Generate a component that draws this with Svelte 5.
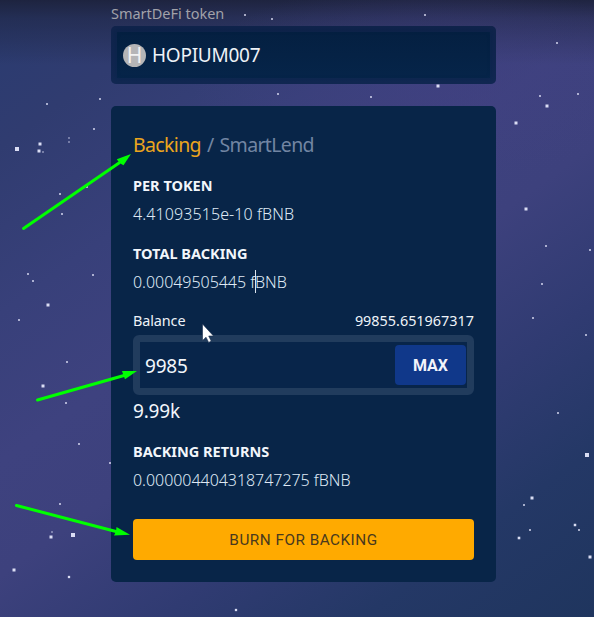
<script>
  const stars = [
    [245,15,2],[272,19,2],[47,104,2],[100,99,2],[278,94,2],[425,15,2],[438,86,3],[371,97,2],
    [557,43,2],[540,96,2],[547,106,3],[578,94,2],[94,129,2],[17,149,4],[40,144,3],[39,151,3],
    [43,152,1.5],[69,138,1.5],[69,142,1.5],[87,187,2],[60,194,2],[62,214,2],[28,274,2],[33,281,2],
    [93,275,2],[48,305,3],[19,320,2],[67,362,2],[43,386,3],[66,403,2],[79,444,2],[110,463,2],
    [60,504,2],[52,532,1.5],[51,537,3],[73,535,4],[14,570,3],[69,577,2.3],[516,123,3],[526,209,3],
    [546,246,2],[590,250,2],[542,284,2],[533,318,2],[586,335,2],[558,413,2],[587,455,4],[532,498,3],
    [524,505,2],[530,530,2],[519,538,2.6],[575,525,2.5],[579,530,2],[590,557,3],[236,610,2.3]
  ];
</script>

<main>
  <svg class="sky" width="594" height="617" viewBox="0 0 594 617" aria-hidden="true">
    {#each stars as [x, y, s]}
      <rect x={x - s / 2} y={y - s / 2} width={s} height={s} fill="#e4e6fb" opacity={s > 2 ? 0.95 : 0.68} />
    {/each}
  </svg>

  <div class="column">
    <div class="label"><span>SmartDeFi token</span></div>
    <div class="token">
      <span class="avatar">H</span>
      <span class="name">HOPIUM007</span>
    </div>

    <section class="card">
      <h2><span class="active">Backing</span><span class="slash">/</span><span class="lend">SmartLend</span></h2>
      <h3 class="per">PER TOKEN</h3>
      <p class="value v1">4.41093515e-10 fBNB</p>
      <h3 class="total">TOTAL BACKING</h3>
      <p class="value v2">0.00049505445 fBNB</p>
      <div class="balance"><span class="bl">Balance</span><span class="amount">99855.651967317</span></div>
      <div class="field">
        <span class="entry">9985</span>
        <button class="max">MAX</button>
      </div>
      <p class="short">9.99k</p>
      <h3 class="returns">BACKING RETURNS</h3>
      <p class="value v3">0.000004404318747275 fBNB</p>
      <button class="burn">BURN FOR BACKING</button>
    </section>
  </div>

  <svg class="overlay" width="594" height="617" viewBox="0 0 594 617" aria-hidden="true">
    <g stroke="#00ff00" stroke-width="3" stroke-linecap="round" fill="#00ff00">
      <path d="M23.5 228.5 L119 163" />
      <path d="M37.5 400 L124 375.5" />
      <path d="M16.5 505.5 L116 531.5" />
      <g stroke="none">
        <path d="M131 154 L123.5 165.2 L119.5 163 L116.8 159.2 Z" />
        <path d="M137 371 L125 379.2 L123.5 375.5 L122 371 Z" />
        <path d="M130 534.8 L114 535.5 L116 531.5 L116.5 527 Z" />
      </g>
    </g>
    <path d="M255.5 270 V293" stroke="#dce4ee" stroke-width="1" />
    <path d="M202.5 324 V340.5 L206 337.2 L208.7 342.5 L211.2 341 L208.7 336 H213.5 Z" fill="#fff" stroke="#182c4b" stroke-width=".6" />
  </svg>
</main>

<style>
  :global(body) { margin: 0; overflow: hidden; }
  main {
    position: relative;
    width: 594px;
    height: 617px;
    overflow: hidden;
    font-family: "Noto Sans", "Open Sans", sans-serif;
    background:
      linear-gradient(180deg, rgba(28, 33, 58, .9) 0, rgba(28, 33, 58, .5) 18px, rgba(28, 33, 58, 0) 65px),
      linear-gradient(144deg, #2a3b70 0%, #303c70 14%, #38407a 30%, #3e427f 44%, #3d417d 55%, #303b72 70%, #243866 84%, #1f355e 100%);
  }
  main::before {
    content: "";
    position: absolute;
    inset: 0;
    background: radial-gradient(ellipse 240px 100px at 430px 80px, rgba(66, 64, 130, .55), transparent);
  }
  .sky, .overlay { position: absolute; left: 0; top: 0; pointer-events: none; }
  .column { position: relative; width: 385px; margin-left: 111px; }
  h2, h3, p { margin: 0; font-weight: 400; white-space: nowrap; }
  button { border: 0; padding: 0; margin: 0; }
  .label { height: 26px; line-height: 26px; font-size: 14.5px; color: #a1a1a9; white-space: nowrap; letter-spacing: -.02px; }
  .token {
    box-sizing: border-box;
    height: 58px;
    display: flex;
    align-items: center;
    gap: 6px;
    padding: 0 12px;
    border-radius: 5px;
    background: linear-gradient(180deg, #041f40, #06254a);
    box-shadow: inset 0 0 0 6px rgba(42, 48, 100, .24), inset 0 0 8px rgba(42, 48, 100, .25);
  }
  .avatar { width: 23px; height: 23px; border-radius: 50%; background: #b5b5b7; color: #f2f2f2; font-size: 21px; line-height: 22px; text-align: center; }
  .name { font-size: 19px; line-height: 26px; color: #eef2f7; letter-spacing: -.25px; }
  .card {
    box-sizing: border-box;
    height: 476px;
    margin-top: 22px;
    padding: 25px 22px 22px;
    border-radius: 5px;
    background: #082548;
    display: flex;
    flex-direction: column;
  }
  h2 { height: 28px; line-height: 28px; font-size: 19.5px; display: flex; gap: 6px; color: #7285a3; letter-spacing: -.65px; }
  .active { color: #eca51d; }
  h3 { height: 20px; line-height: 20px; font-size: 14.5px; font-weight: 700; color: #f2f6fb; }
  .per { margin-top: 16px; }
  .value { height: 24px; line-height: 24px; font-size: 16px; font-weight: 300; color: #dfe9f5; }
  .v1, .v2, .v3 { margin-top: 7px; }
  .v1 { letter-spacing: .1px; }
  .v2, .v3 { letter-spacing: -.04px; }
  .total { margin-top: 17px; }
  .returns { margin-top: 17px; }
  .balance { height: 20px; line-height: 20px; margin-top: 17px; display: flex; justify-content: space-between; font-size: 14.4px; color: #eef3f8; }
  .bl { letter-spacing: -.1px; }
  .field {
    box-sizing: border-box;
    height: 60px;
    margin-top: 4px;
    border: 7px solid #213c5d;
    border-radius: 6px;
    display: flex;
    align-items: center;
    justify-content: space-between;
    padding: 0 1px 0 5px;
    background: #08254a;
  }
  .entry, .short { font-size: 19px; color: #f2f6fb; letter-spacing: -.2px; }
  .entry { padding-top: 2px; }
  .max { width: 71px; height: 40px; border-radius: 4px; background: #10388a; color: #f2f4fb; font: 700 16px Roboto, sans-serif; }
  .short { height: 26px; line-height: 26px; margin-top: 3px; }
  .burn {
    height: 41px;
    margin-top: 27px;
    border-radius: 4px;
    background: #ffaa00;
    color: #49391e;
    font: 400 15.3px Roboto, sans-serif;
    letter-spacing: .5px;
  }
</style>
